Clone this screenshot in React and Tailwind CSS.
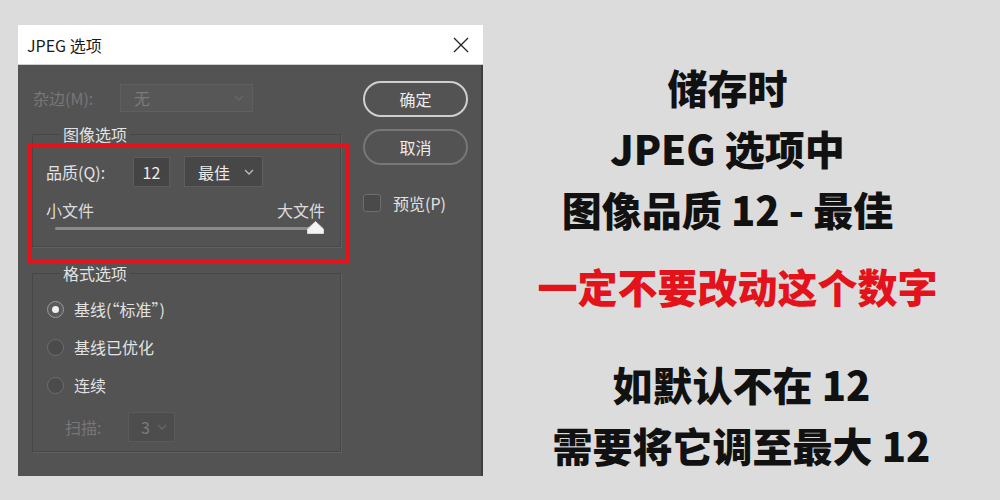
const cjk = { fontFamily: '"Noto Sans CJK SC", "Noto Sans", sans-serif' }

function Chevron({ className = '' }) {
  return (
    <svg width="10" height="6" viewBox="0 0 10 6" className={className}>
      <path d="M1 1 L5 5 L9 1" fill="none" stroke="currentColor" strokeWidth="1.3" />
    </svg>
  )
}

function Radio({ checked, label }) {
  return (
    <div className="h-[38px] flex items-center gap-[10px] pl-[14px]">
      <span className={`w-[17px] h-[17px] rounded-full border flex items-center justify-center ${checked ? 'border-[#9a9a9a] bg-[#5a5a5a]' : 'border-[#6e6e6e] bg-[#4b4b4b]'}`}>
        {checked && <span className="w-[7px] h-[7px] rounded-full bg-[#f0f0f0]" />}
      </span>
      <span className="text-[16px] text-[#e2e2e2]">{label}</span>
    </div>
  )
}

function Dialog() {
  return (
    <div className="w-[465px] h-[451px] flex flex-col ml-[18px] mt-[25px]" style={cjk}>
      <div className="h-[40px] bg-white flex items-center justify-between pl-[9px] pr-[14px] border-b border-[#d0d0d0]">
        <span className="text-[16px] text-[#1a1a1a]">JPEG 选项</span>
        <svg width="16" height="16" viewBox="0 0 16 16">
          <path d="M1 1 L15 15 M15 1 L1 15" stroke="#222" strokeWidth="1.3" />
        </svg>
      </div>

      <div className="relative flex-1 bg-[#535353] flex pl-[14px] pt-[16px] border-r-2 border-[#3d3d3d]">
        <div className="w-[309px] pt-[3px]">
          <div className="h-[28px] flex items-center">
            <span className="w-[88px] pl-[1px] text-[16px] text-[#777]">杂边(M):</span>
            <div className="w-[133px] h-[28px] bg-[#575757] border border-[#5f5f5f] flex items-center justify-between pl-[13px] pr-[8px]">
              <span className="text-[16px] text-[#7a7a7a]">无</span>
              <Chevron className="text-[#666]" />
            </div>
          </div>

          <fieldset className="mt-[11px] border border-[#474747] shadow-[1px_1px_0_#606060] pl-[13px] pr-[15px] pb-[11px]">
            <legend className="ml-[14px] px-[3px] text-[16px] leading-[22px] text-[#e2e2e2]">图像选项</legend>
            <div className="mt-[11px] h-[31px] flex items-center">
              <span className="w-[87px] text-[16px] text-[#e2e2e2]">品质(Q):</span>
              <div className="w-[37px] h-[30px] bg-[#444] border border-[#5c5c5c] flex items-center justify-center text-[16px] text-[#ececec]">12</div>
              <div className="ml-[14px] w-[79px] h-[31px] bg-[#474747] border border-[#5d5d5d] flex items-center justify-between pl-[13px] pr-[8px]">
                <span className="text-[16px] text-[#ececec]">最佳</span>
                <Chevron className="text-[#bdbdbd]" />
              </div>
            </div>
            <div className="mt-[12px] h-[22px] flex items-center justify-between text-[16px] text-[#dcdcdc]">
              <span>小文件</span>
              <span>大文件</span>
            </div>
            <div className="relative h-[14px] flex items-center pl-[9px] pr-[4px]">
              <div className="flex-1 h-[3px] bg-[#8a8a8a] rounded-full" />
              <svg width="17" height="13" viewBox="0 0 17 13" className="absolute right-[1px] top-0">
                <path d="M8.5 0.5 L16.5 8 L16.5 12.5 L0.5 12.5 L0.5 8 Z" fill="#f4f4f4" stroke="#d8d8d8" strokeLinejoin="round" />
              </svg>
            </div>
          </fieldset>

          <fieldset className="mt-[15px] border border-[#474747] shadow-[1px_1px_0_#606060] pb-[9px]">
            <legend className="ml-[27px] px-[3px] text-[16px] leading-[22px] text-[#e2e2e2]">格式选项</legend>
            <div className="pt-[6px]">
              <Radio checked label="基线(“标准”)" />
              <Radio label="基线已优化" />
              <Radio label="连续" />
            </div>
            <div className="mt-[8px] h-[30px] flex items-center pl-[32px]">
              <span className="w-[63px] text-[16px] text-[#777]">扫描:</span>
              <div className="w-[47px] h-[30px] bg-[#4d4d4d] border border-[#5a5a5a] flex items-center justify-between pl-[12px] pr-[7px]">
                <span className="text-[16px] text-[#7c7c7c]">3</span>
                <Chevron className="text-[#666]" />
              </div>
            </div>
          </fieldset>
        </div>

        <div className="ml-[22px] flex flex-col">
          <button className="w-[105px] h-[36px] rounded-full border-2 border-[#cfcfcf] text-[16px] text-[#ececec]">确定</button>
          <button className="mt-[12px] w-[105px] h-[36px] rounded-full border-2 border-[#777] text-[16px] text-[#ececec]">取消</button>
          <div className="mt-[26px] flex items-center gap-[12px]">
            <span className="w-[18px] h-[18px] rounded-[3px] border border-[#6e6e6e] bg-[#4a4a4a]" />
            <span className="text-[16px] text-[#e2e2e2]">预览(P)</span>
          </div>
        </div>

        <div className="absolute left-[10px] top-[79px] w-[322px] h-[119px] border-4 border-[#e3121b]" />
      </div>
    </div>
  )
}

export default function App() {
  return (
    <div className="w-[1000px] h-[500px] bg-[#dcdcdc] flex overflow-hidden">
      <Dialog />
      <div className="flex-1 flex flex-col items-center pt-[57px] text-[40px] font-black text-[#111]" style={cjk}>
        <div className="flex flex-col items-center leading-[61px] pr-[28px]">
          <span>储存时</span>
          <span>JPEG 选项中</span>
          <span>图像品质 12 - 最佳</span>
        </div>
        <span className="mt-[16px] leading-[61px] pr-[8px] text-[#e3121b]">一定不要改动这个数字</span>
        <div className="mt-[37px] flex flex-col items-center leading-[61px]">
          <span>如默认不在 12</span>
          <span>需要将它调至最大 12</span>
        </div>
      </div>
    </div>
  )
}
